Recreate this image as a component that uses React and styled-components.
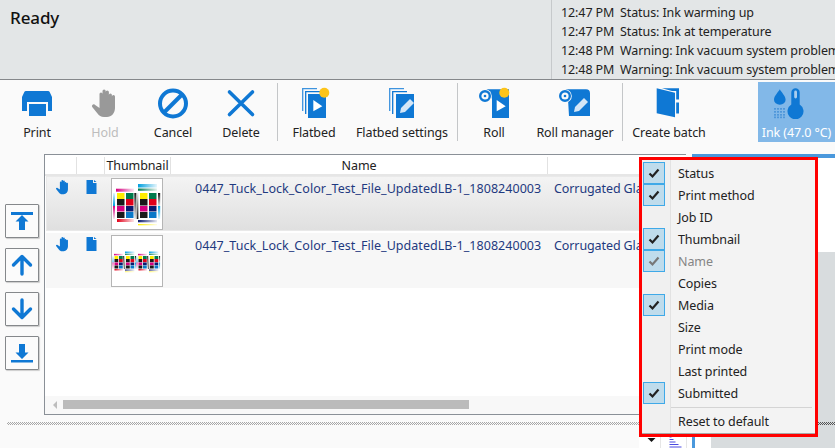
import React from "react";
import styled, { createGlobalStyle } from "styled-components";

const BLUE = "#0f78d4";
const FONT = `"Noto Sans", "Open Sans", sans-serif`;

const Global = createGlobalStyle`
  html, body { margin: 0; padding: 0; height: 448px; overflow: hidden; background: #fafafa; }
  #root { height: 448px; }
  * { box-sizing: border-box; }
`;

const Page = styled.div`
  position: relative;
  width: 835px;
  height: 448px;
  overflow: hidden;
  display: flex;
  flex-direction: column;
  font-family: ${FONT};
  font-size: 12.5px;
  letter-spacing: -0.1px;
  color: #222;
  background: #fafafa;
`;

/* header */
const Header = styled.header`
  flex: none;
  height: 80px;
  display: flex;
  background: #e3e6e7;
  border-bottom: 1px solid #85888b;
`;
const Title = styled.h1`
  flex: 1;
  margin: 0;
  padding: 6px 0 0 10px;
  font-size: 17px;
  line-height: 24px;
  font-weight: 500;
  letter-spacing: -0.1px;
  color: #111;
`;
const Log = styled.div`
  flex: none;
  width: 284px;
  padding: 4px 0 0 9px;
  border-left: 1px solid #c6c9cb;
  overflow: hidden;
`;
const LogRow = styled.div`
  display: flex;
  height: 19px;
  line-height: 18px;
  white-space: nowrap;
`;
const LogTime = styled.span`
  flex: none;
  width: 59px;
`;

/* toolbar */
const Toolbar = styled.nav`
  flex: none;
  height: 70px;
  padding: 2px 0 0 3px;
  display: flex;
  align-items: flex-start;
`;
const ToolButton = styled.div`
  flex: none;
  width: ${(p) => p.$w}px;
  margin-left: ${(p) => p.$ml || 0}px;
  height: 60px;
  padding-top: 5px;
  display: flex;
  flex-direction: column;
  align-items: center;
  background: ${(p) => (p.$active ? "#82b8e8" : "transparent")};
  color: ${(p) => (p.$active ? "#fff" : p.$disabled ? "#bdbdbd" : "#222")};
  white-space: nowrap;
`;
const ToolIcon = styled.svg`
  display: block;
  flex: none;
  height: 32px;
  margin-bottom: 6px;
`;
const ToolLabel = styled.span`
  line-height: 16px;
`;
const ToolSep = styled.div`
  flex: none;
  width: 1px;
  height: 58px;
  margin: 1px 2px 0 ${(p) => p.$ml}px;
  background: #c4c6c8;
`;

/* workspace */
const Workspace = styled.main`
  flex: 1;
  min-height: 0;
  display: flex;
`;
const LeftPane = styled.section`
  flex: none;
  width: 692px;
  display: flex;
  flex-direction: column;
`;
const TableArea = styled.div`
  flex: none;
  height: 265px;
  padding: 4px 6px 0 5px;
  display: flex;
`;
const ArrowColumn = styled.div`
  flex: none;
  width: 39px;
  padding-top: 50px;
  display: flex;
  flex-direction: column;
  gap: 10px;
`;
const ArrowButton = styled.div`
  width: 34px;
  height: 34px;
  border: 1px solid #85888b;
  border-radius: 1px;
  background: #fbfbfb;
  box-shadow: 1px 1px 1px rgba(0, 0, 0, 0.18);
  svg { display: block; margin: -1px; }
`;
const Table = styled.div`
  flex: 1;
  min-width: 0;
  display: flex;
  flex-direction: column;
  border: 1px solid #8a9097;
  border-right: 0;
  background: #fff;
  overflow: hidden;
`;
const columns = "29px 28px 66px 377px 1fr";
const HeaderRow = styled.div`
  flex: none;
  display: grid;
  grid-template-columns: ${columns};
  height: 21px;
  padding: 2px 0 0 3px;
  border-bottom: 2px solid #e6e6e6;
  background: #fff;
`;
const HeaderCell = styled.div`
  border-right: 1px solid #e2e2e2;
  text-align: center;
  line-height: 17px;
  color: #222;
  white-space: nowrap;
`;
const Rows = styled.div`
  flex: 1;
  padding-left: 1px;
  display: flex;
  flex-direction: column;
  gap: 2px;
  min-height: 0;
`;
const Row = styled.div`
  flex: none;
  height: 55px;
  display: grid;
  grid-template-columns: ${columns};
  padding-left: 2px;
  background: ${(p) =>
    p.$selected ? "linear-gradient(#f4f4f4, #dfdfdf)" : "#f7f7f7"};
  box-shadow: ${(p) => (p.$selected ? "inset 0 0 0 1px #e9e9e9" : "none")};
  white-space: nowrap;
`;
const IconCell = styled.div`
  padding-top: 3px;
  display: flex;
  justify-content: center;
  svg { display: block; }
`;
const ThumbCell = styled.div`
  padding: 2px 0 0 6px;
`;
const Thumb = styled.div`
  width: 52px;
  height: 52px;
  border: 1px solid #b5b5b5;
  background: #fff;
  svg { display: block; }
`;
const NameCell = styled.div`
  padding: 4px 0 0 24px;
  line-height: 17px;
  letter-spacing: 0.04px;
  color: #1f3a80;
  overflow: hidden;
`;
const MediaCell = styled.div`
  padding: 4px 0 0 6px;
  line-height: 17px;
  color: #1f3a80;
`;
const ScrollBar = styled.div`
  flex: none;
  height: 18px;
  padding: 4px 0 0 8px;
  display: flex;
  align-items: flex-start;
  background: #f8f8f8;
`;
const ScrollArrow = styled.div`
  width: 0;
  height: 0;
  margin: 1px 6px 0 0;
  border: 4px solid transparent;
  border-left: 0;
  border-right: 4px solid #bdbdbd;
`;
const ScrollThumb = styled.div`
  width: 406px;
  height: 9px;
  background: #bbb;
`;
const Splitter = styled.div`
  flex: none;
  height: 3px;
  margin: 7px 0 0 7px;
  background: repeating-conic-gradient(#a8a8a8 0 25%, transparent 0 50%) 0 0 / 2px 2px;
`;
const BottomBar = styled.div`
  flex: 1;
  margin-top: 1px;
  display: flex;
  justify-content: flex-end;
`;
const BottomTools = styled.div`
  width: 53px;
  display: flex;
  align-items: flex-end;
  background: #fff;
  svg { display: block; }
`;
const BottomCell = styled.div`
  height: 22px;
  width: ${(p) => p.$w}px;
  border-right: 1px solid #e6e6e6;
`;
const RightPane = styled.aside`
  flex: 1;
  margin-top: 4px;
  display: flex;
  flex-direction: column;
  border-top: 4px solid #4a98dc;
  border-left: 3px solid #4a98dc;
  background: #fff;
`;
const PreviewBlank = styled.div`
  flex: none;
  height: 94px;
`;
const PreviewGray = styled.div`
  flex: 1;
  margin-left: 16px;
  padding-top: 170px;
  background: #d8dcde;
`;
const GrayDots = styled.div`
  height: 3px;
  background: repeating-conic-gradient(#555 0 25%, transparent 0 50%) 0 0 / 2px 2px;
`;

/* column menu */
const Menu = styled.div`
  position: absolute;
  left: 639px;
  top: 157px;
  width: 179px;
  padding: 2px 0 2px;
  border: 3px solid #f00;
  background: linear-gradient(90deg, #f0f0f0 28px, #e2e2e2 28px 29px, #f3f3f3 29px);
  box-shadow: inset 0 -1px #a8a8a8;
`;
const MenuItem = styled.div`
  height: 22px;
  display: flex;
  align-items: center;
  color: ${(p) => (p.$disabled ? "#858585" : "#222")};
  white-space: nowrap;
`;
const CheckSlot = styled.div`
  flex: none;
  width: 22px;
  height: 22px;
  margin: 0 13px 0 1px;
  display: flex;
  align-items: center;
  justify-content: center;
  ${(p) => p.$on && "background: #bfdcec; border: 1px solid #3fa9e8;"}
`;
const MenuSep = styled.div`
  height: 1px;
  margin: 3px 3px 2px 29px;
  background: #d4d4d4;
`;

/* drawings */
const Svg = ({ w = 32, h = 32, vb, children }) => (
  <ToolIcon width={w} height={h} viewBox={vb || `0 0 ${w} ${h}`}>{children}</ToolIcon>
);

const PrintIcon = () => (
  <Svg>
    <path fill={BLUE} d="M5 4h22a2 2 0 0 1 1.8 1.2L31 10v14h-4V15H6v9H1V10l2.200-4.800A2 2 0 0 1 5 4z" />
    <rect x="8" y="17" width="17" height="12" fill={BLUE} />
  </Svg>
);
const handPath =
  "M10.500 16V7a1.500 1.500 0 0 1 3 0V4a1.600 1.600 0 0 1 3.200 0v1a1.600 1.600 0 0 1 3.200 0v3a1.500 1.500 0 0 1 3 0v1.500a1.500 1.500 0 0 1 3.100 0V21c0 5-3.500 9-8 9h-3c-3 0-5-1.500-6.500-3.500L3.200 20c-1-1.300 1-3.500 2.600-2.300l4.700 3.300z";
const HoldIcon = () => (
  <Svg>
    <path fill="#999" d={handPath} />
  </Svg>
);
const CancelIcon = () => (
  <Svg>
    <g fill="none" stroke={BLUE} strokeWidth="4">
      <circle cx="16" cy="16.500" r="13" />
      <path d="M25 7.500 7 25.500" />
    </g>
  </Svg>
);
const DeleteIcon = () => (
  <Svg>
    <path d="M4.500 5l23 22.500M27.500 5 4.500 27.500" fill="none" stroke={BLUE} strokeWidth="3.600" strokeLinecap="round" />
  </Svg>
);
const Play = ({ x }) => <path d={`M${x} 13l9 6.200-9 5z`} fill="#fff" />;
const Dot = () => <circle cx="26.300" cy="5.700" r="5" fill="#fdc41a" />;
const Pencil = ({ dx = 0, dy = 0 }) => (
  <g transform={`translate(${dx} ${dy})`}>
    <path d="M14 26l1-5 9-9 4 4-9 9z" fill="#d3e6f7" />
  </g>
);
const Stack = ({ x }) => (
  <g fill="none" stroke={BLUE} strokeWidth="1.300">
    <path d={`M${x + 0.700} 24V1.700H${x + 15}`} stroke="#3d93de" />
    <path d={`M${x + 3.700} 27V4.700H${x + 18}`} />
  </g>
);
const FlatbedIcon = () => (
  <Svg>
    <Stack x={4} />
    <rect x="10" y="7" width="18" height="24" fill={BLUE} stroke="#fafafa" strokeWidth="0" />
    <Play x={15.300} />
    <Dot />
  </Svg>
);
const FlatbedSettingsIcon = () => (
  <Svg>
    <Stack x={3} />
    <rect x="10" y="7" width="18" height="24" fill={BLUE} />
    <Pencil />
  </Svg>
);
const RollIcon = () => (
  <Svg>
    <path fill={BLUE} d="M7 2.300h24V31H14V12l-1-3c-1-4-3-6.700-6-6.700z" />
    <circle cx="7" cy="9" r="6.800" fill="#fafafa" />
    <circle cx="7" cy="9" r="4.800" fill="none" stroke={BLUE} strokeWidth="2.400" />
    <circle cx="7" cy="9" r="1.300" fill={BLUE} />
    <Play x={18.700} />
    <Dot />
  </Svg>
);
const RollManagerIcon = () => (
  <Svg>
    <path fill={BLUE} d="M6 2.300h21a4 4 0 0 1 4 4V29H10l-1-17c0-5-1-9.700-3-9.700z" />
    <circle cx="6" cy="9" r="6.800" fill="#fafafa" />
    <circle cx="6" cy="9" r="4.800" fill="none" stroke={BLUE} strokeWidth="2.400" />
    <circle cx="6" cy="9" r="1.300" fill={BLUE} />
    <Pencil dx={1} dy={-1} />
  </Svg>
);
const BatchIcon = () => (
  <Svg>
    <path fill={BLUE} d="M3.700 1.300 22 5.700v24.600L3.700 26.300z" />
    <path fill={BLUE} d="M9 1.300h17v11.200h-2.800V4H19z" />
    <rect x="23.200" y="15.500" width="2.800" height="11" fill={BLUE} />
  </Svg>
);
const InkIcon = () => (
  <Svg w={48}>
    <path fill={BLUE} d="M6.800 2.300c1.500 3 5.800 6.500 5.800 10.500a5.800 4.900 0 0 1-11.600 0c0-4 4.300-7.500 5.800-10.500z" />
    <g fill="#4f97da">
      {[21, 24, 27, 29.500].map((y) =>
        [1, 4, 7, 10].map((x) => <rect key={`${x}-${y}`} x={x} y={y} width="2" height="1.700" />)
      )}
    </g>
    <path fill={BLUE} d="M18.300 5.500a4.200 4.200 0 0 1 8.400 0V17.500a8 8 0 1 1-8.400 0z" />
    <rect x="21.200" y="3.500" width="2.800" height="8" rx="1.400" fill="#a8cdee" />
  </Svg>
);

const ToTop = () => (
  <svg width="34" height="34" viewBox="0 0 34 34">
    <rect x="6" y="8" width="22" height="3" fill={BLUE} />
    <path fill={BLUE} d="M17 11l6.500 6.500H20V26h-6v-8.500h-3.500z" />
  </svg>
);
const ArrowUp = () => (
  <svg width="34" height="34" viewBox="0 0 34 34">
    <path d="M17 26V9M8.500 17 17 8.500 25.500 17" fill="none" stroke={BLUE} strokeWidth="3.400" strokeLinecap="round" strokeLinejoin="round" />
  </svg>
);
const ArrowDown = () => (
  <svg width="34" height="34" viewBox="0 0 34 34">
    <path d="M17 8v17M8.500 17 17 25.500 25.500 17" fill="none" stroke={BLUE} strokeWidth="3.400" strokeLinecap="round" strokeLinejoin="round" />
  </svg>
);
const ToBottom = () => (
  <svg width="34" height="34" viewBox="0 0 34 34">
    <path fill={BLUE} d="M14 8h6v8.500h3.500L17 23l-6.500-6.500H14z" />
    <rect x="6" y="24" width="22" height="2.500" fill={BLUE} />
  </svg>
);

const HandSmall = () => (
  <svg width="13" height="16" viewBox="3 1 25 30">
    <path fill={BLUE} d={handPath} />
  </svg>
);
const DocSmall = () => (
  <svg width="11" height="16" viewBox="0 0 11 16">
    <path fill={BLUE} d="M.500 1H7v3h3.500v11H.500zM8 1l2.500 2H8z" />
  </svg>
);
const Check = ({ color }) => (
  <svg width="12" height="12" viewBox="0 0 12 12">
    <path d="M1.500 6.500 4.500 9.500 10.500 2.500" fill="none" stroke={color} strokeWidth="2.200" />
  </svg>
);

const Strip = ({ id, x, y, w, h, color, vertical, reverse }) => (
  <>
    <linearGradient id={id} x1="0" y1="0" x2={vertical ? 0 : 1} y2={vertical ? 1 : 0}>
      <stop offset="0" stopColor={color} stopOpacity={reverse ? 0.1 : 1} />
      <stop offset="1" stopColor={color} stopOpacity={reverse ? 1 : 0.1} />
    </linearGradient>
    <rect x={x} y={y} width={w} height={h} fill={`url(#${id})`} />
  </>
);
const Swatches = ({ x, colors }) => (
  <>
    {[[14, 6], [20, 6.500], [27, 5.500], [33, 6]].map(([y, h], r) =>
      [0, 9].map((dx, c) => (
        <rect key={`${r}-${c}`} x={x + dx} y={y} width="7.500" height={h} fill={colors[r][c]} />
      ))
    )}
  </>
);
const pageColors = [
  ["#ffec00", "#007a4d"],
  ["#1a1a1a", "#e2001a"],
  ["#d6007f", "#0b1a6e"],
  ["#1a1a1a", "#0a78c8"],
];
const TestSheet = ({ p }) => (
  <>
    <Strip id={`${p}a`} x={4} y={9.700} w={18} h={3} color="#d6007f" />
    <Strip id={`${p}b`} x={1} y={14} w={2} h={13} color="#00a0e0" vertical reverse />
    <Strip id={`${p}c`} x={1} y={27} w={2} h={13} color="#d6007f" vertical />
    <Strip id={`${p}d`} x={22.300} y={14} w={2} h={26} color="#1a1a1a" vertical />
    <Swatches x={5} colors={pageColors} />
    <Strip id={`${p}e`} x={5} y={40} w={17} h={3} color="#e2001a" />
    <Strip id={`${p}f`} x={26} y={5} w={19} h={3.500} color="#00a0e0" />
    <Strip id={`${p}g`} x={26} y={9.500} w={19} h={2.300} color="#007a4d" />
    <Strip id={`${p}h`} x={24.700} y={14} w={1.700} h={26} color="#1a1a1a" vertical reverse />
    <Swatches x={28} colors={pageColors} />
    <Strip id={`${p}i`} x={46} y={14} w={2.200} h={13} color="#1a1a1a" vertical />
    <Strip id={`${p}j`} x={46} y={27} w={2.200} h={13} color="#00a0e0" vertical />
    <Strip id={`${p}k`} x={26} y={41} w={19} h={2.300} color="#0b1a6e" />
    <Strip id={`${p}l`} x={26} y={45} w={19} h={1.300} color="#ffec00" />
  </>
);
const LargeThumb = () => (
  <svg width="50" height="50" viewBox="0 0 50 50">
    <TestSheet p="L" />
  </svg>
);
const SmallThumb = () => (
  <svg width="50" height="50" viewBox="0 0 50 50">
    <g transform="translate(0 13) scale(.5)"><TestSheet p="M" /></g>
    <g transform="translate(24 13) scale(.5)"><TestSheet p="N" /></g>
  </svg>
);

const tools = [
  { label: "Print", w: 68, Icon: PrintIcon },
  { label: "Hold", w: 68, Icon: HoldIcon, disabled: true },
  { label: "Cancel", w: 68, Icon: CancelIcon },
  { label: "Delete", w: 68, Icon: DeleteIcon },
  { sep: 2 },
  { label: "Flatbed", w: 68, Icon: FlatbedIcon },
  { label: "Flatbed settings", w: 104, ml: 2, Icon: FlatbedSettingsIcon },
  { sep: 3 },
  { label: "Roll", w: 68, Icon: RollIcon },
  { label: "Roll manager", w: 90, ml: 2, Icon: RollManagerIcon },
  { sep: 2 },
  { label: "Create batch", w: 88, Icon: BatchIcon },
  { label: "Ink (47.0 °C)", w: 77, ml: 45, Icon: InkIcon, active: true },
];

const logs = [
  ["12:47 PM", "Status: Ink warming up"],
  ["12:47 PM", "Status: Ink at temperature"],
  ["12:48 PM", "Warning: Ink vacuum system problem"],
  ["12:48 PM", "Warning: Ink vacuum system problem"],
];

const menuItems = [
  ["Status", true],
  ["Print method", true],
  ["Job ID", false],
  ["Thumbnail", true],
  ["Name", true, true],
  ["Copies", false],
  ["Media", true],
  ["Size", false],
  ["Print mode", false],
  ["Last printed", false],
  ["Submitted", true],
];

const FILE = "0447_Tuck_Lock_Color_Test_File_UpdatedLB-1_1808240003";

export default function App() {
  return (
    <Page>
      <Global />
      <Header>
        <Title>Ready</Title>
        <Log>
          {logs.map(([t, m], i) => (
            <LogRow key={i}>
              <LogTime>{t}</LogTime>
              <span>{m}</span>
            </LogRow>
          ))}
        </Log>
      </Header>

      <Toolbar>
        {tools.map((t, i) =>
          t.sep ? (
            <ToolSep key={i} $ml={t.sep} />
          ) : (
            <ToolButton key={i} $w={t.w} $ml={t.ml} $active={t.active} $disabled={t.disabled}>
              <t.Icon />
              <ToolLabel>{t.label}</ToolLabel>
            </ToolButton>
          )
        )}
      </Toolbar>

      <Workspace>
        <LeftPane>
          <TableArea>
            <ArrowColumn>
              <ArrowButton><ToTop /></ArrowButton>
              <ArrowButton><ArrowUp /></ArrowButton>
              <ArrowButton><ArrowDown /></ArrowButton>
              <ArrowButton><ToBottom /></ArrowButton>
            </ArrowColumn>
            <Table>
              <HeaderRow>
                <HeaderCell />
                <HeaderCell />
                <HeaderCell>Thumbnail</HeaderCell>
                <HeaderCell>Name</HeaderCell>
                <HeaderCell />
              </HeaderRow>
              <Rows>
                <Row $selected>
                  <IconCell><HandSmall /></IconCell>
                  <IconCell><DocSmall /></IconCell>
                  <ThumbCell><Thumb><LargeThumb /></Thumb></ThumbCell>
                  <NameCell>{FILE}</NameCell>
                  <MediaCell>Corrugated Glass</MediaCell>
                </Row>
                <Row>
                  <IconCell><HandSmall /></IconCell>
                  <IconCell><DocSmall /></IconCell>
                  <ThumbCell><Thumb><SmallThumb /></Thumb></ThumbCell>
                  <NameCell>{FILE}</NameCell>
                  <MediaCell>Corrugated Glass</MediaCell>
                </Row>
              </Rows>
              <ScrollBar>
                <ScrollArrow />
                <ScrollThumb />
              </ScrollBar>
            </Table>
          </TableArea>
          <Splitter />
          <BottomBar>
            <BottomTools>
              <BottomCell $w={22}>
                <svg width="21" height="22" viewBox="0 0 21 22">
                  <path d="M8.500 12h8l-4 4z" fill="#111" />
                </svg>
              </BottomCell>
              <BottomCell $w={26}>
                <svg width="25" height="22" viewBox="0 0 25 22">
                  <path d="M8.500 11h2M8.500 13.500h4M8.500 16h6M8.500 18.500h9M8.500 21h12" stroke="#4a4ae0" strokeWidth="1" fill="none" />
                </svg>
              </BottomCell>
            </BottomTools>
          </BottomBar>
        </LeftPane>
        <RightPane>
          <PreviewBlank />
          <PreviewGray>
            <GrayDots />
          </PreviewGray>
        </RightPane>
      </Workspace>

      <Menu>
        {menuItems.map(([label, on, disabled]) => (
          <MenuItem key={label} $disabled={disabled}>
            <CheckSlot $on={on}>
              {on && <Check color={disabled ? "#777" : "#222"} />}
            </CheckSlot>
            {label}
          </MenuItem>
        ))}
        <MenuSep />
        <MenuItem>
          <CheckSlot />
          Reset to default
        </MenuItem>
      </Menu>
    </Page>
  );
}
